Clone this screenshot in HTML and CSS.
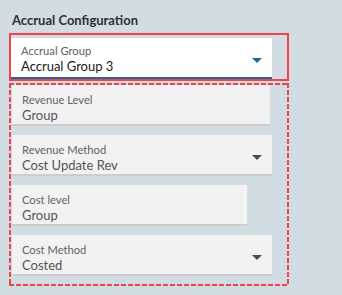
FILE: index.html
```html
<!DOCTYPE html>
<html>
<head>
<meta charset="utf-8">
<link rel="stylesheet" href="styles.css">
</head>
<body>
<div class="panel">
  <h2 class="title">Accrual Configuration</h2>
  <div class="solid-box">
    <div class="field field-active">
      <div class="field-text">
        <div class="label">Accrual Group</div>
        <div class="value">Accrual Group 3</div>
      </div>
      <span class="caret caret-blue"></span>
    </div>
  </div>
  <div class="dashed-box">
    <div class="field field-ro w258">
      <div class="field-text">
        <div class="label">Revenue Level</div>
        <div class="value">Group</div>
      </div>
    </div>
    <div class="field field-ro w260">
      <div class="field-text">
        <div class="label">Revenue Method</div>
        <div class="value">Cost Update Rev</div>
      </div>
      <span class="caret"></span>
    </div>
    <div class="field field-ro w235">
      <div class="field-text">
        <div class="label">Cost level</div>
        <div class="value">Group</div>
      </div>
    </div>
    <div class="field field-ro w260">
      <div class="field-text">
        <div class="label">Cost Method</div>
        <div class="value">Costed</div>
      </div>
      <span class="caret"></span>
    </div>
  </div>
</div>
</body>
</html>
```

FILE: styles.css
```css
html, body {
  margin: 0;
  padding: 0;
  background: #d1dde2;
}
body {
  font-family: Lato, "Liberation Sans", sans-serif;
  width: 342px;
  height: 295px;
  overflow: hidden;
}
.panel {
  padding: 11px 0 0 9px;
}
.title {
  margin: 0 0 4px 3px;
  font-size: 13px;
  font-weight: 700;
  color: #303030;
  line-height: 18px;
  height: 18px;
}
.solid-box {
  width: 276px;
  border: 2px solid #f2424a;
  padding: 3px 0 0 0;
  height: 41px;
}
.dashed-box {
  box-sizing: border-box;
  margin-top: 2px;
  width: 280px;
  height: 203px;
  padding: 2px 0 0 3px;
  display: flex;
  flex-direction: column;
  gap: 9px;
  background:
    repeating-linear-gradient(90deg, #f2424a 0 5px, transparent 5px 7px) top left / 100% 2px no-repeat,
    repeating-linear-gradient(90deg, #f2424a 0 5px, transparent 5px 7px) bottom left / 100% 2px no-repeat,
    repeating-linear-gradient(180deg, #f2424a 0 5px, transparent 5px 7px) top left / 2px 100% no-repeat,
    repeating-linear-gradient(180deg, #f2424a 0 5px, transparent 5px 7px) top right / 2px 100% no-repeat;
}
.field {
  box-sizing: border-box;
  display: flex;
  align-items: center;
  padding: 0 10px 0 10px;
  height: 41px;
  flex: none;
}
.field-active {
  width: 261px;
  background: #fff;
  border-bottom: 2px solid #1b6a9c;
}
.field-ro {
  background: #f2f2f2;
  border-bottom: 2px solid #cdcdcd;
}
.w258 { width: 258px; }
.w260 { width: 260px; }
.w235 { width: 235px; box-shadow: inset -3px 0 0 #f6f6f6; }
.field-text {
  flex: 1;
  min-width: 0;
  align-self: flex-start;
  padding-top: 7px;
}
.field-active .field-text {
  padding-top: 5px;
}
.label {
  font-size: 11.2px;
  line-height: 15px;
  color: #626262;
}
.value {
  font-size: 13px;
  line-height: 17px;
  color: #555;
}
.field-active .value {
  color: #1a1a1a;
}
.caret {
  width: 0;
  height: 0;
  border-left: 5px solid transparent;
  border-right: 5px solid transparent;
  border-top: 5px solid #4a4a4a;
  margin-top: 5px;
}
.caret-blue {
  border-top-color: #1b6a9c;
}
```
